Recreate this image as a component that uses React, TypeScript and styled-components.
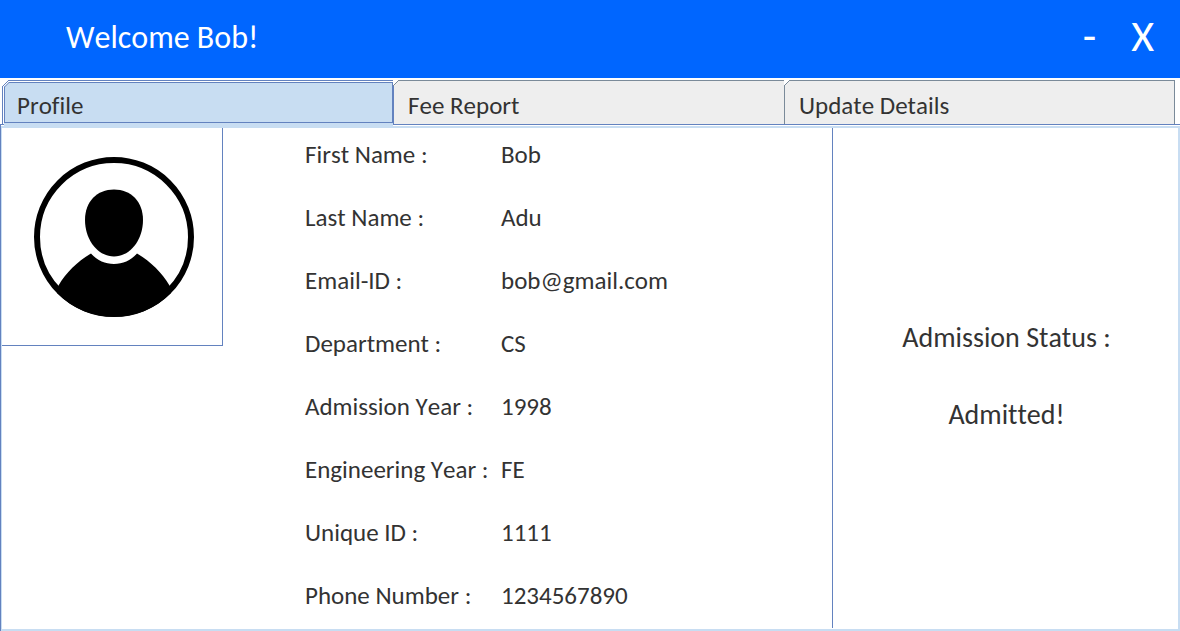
import React, { useState } from "react";
import styled, { createGlobalStyle, css } from "styled-components";

const color = {
  header: "#0066ff",
  line: "#6382bf",
  tabLine: "#7a8a99",
  selected: "#c8ddf2",
  idle: "#eeeeee",
  text: "#333333",
};

const GlobalStyle = createGlobalStyle`
  * { box-sizing: border-box; }
  body {
    margin: 0;
    background: #fff;
    color: ${color.text};
    font-family: Calibri, Carlito, Lato, sans-serif;
    font-size: 25px;
    line-height: 28px;
    font-kerning: none;
    font-variant-ligatures: none;
  }
`;

const Window = styled.div`
  display: flex;
  flex-direction: column;
  min-height: 100vh;
`;

const Header = styled.header`
  display: flex;
  align-items: center;
  justify-content: space-between;
  height: 78px;
  padding: 0 26px 2px 66px;
  background: ${color.header};
  color: #fff;
`;

const Title = styled.h1`
  margin: 0;
  font-size: 32px;
  line-height: 40px;
  font-weight: 400;
`;

const WindowControls = styled.div`
  display: flex;
  align-items: center;
  gap: 35px;
  padding-bottom: 5px;
`;

const ControlButton = styled.button`
  padding: 0;
  border: 0;
  background: none;
  color: inherit;
  font: inherit;
  font-size: 44px;
  line-height: 48px;
  cursor: pointer;
`;

const TabList = styled.div`
  display: grid;
  grid-template-columns: 392fr 391fr 390fr;
  padding: 2px 5px 0 2px;
`;

const Tab = styled.button<{ $selected: boolean }>`
  position: relative;
  display: flex;
  align-items: flex-start;
  min-width: 0;
  height: 44px;
  margin: 0;
  padding: 11px 14px 0;
  border: solid ${color.tabLine};
  border-width: 1px 1px 0 0;
  background: ${color.idle};
  color: inherit;
  font: inherit;
  text-align: left;
  cursor: pointer;

  ${(p) =>
    p.$selected &&
    css`
      padding: 1px 0 1px 1px;
      border-color: ${color.line};
      border-left-width: 1px;
      background: #fff;

      &::after {
        content: "";
        position: absolute;
        left: 1px;
        right: 0;
        top: 42px;
        height: 5px;
        background: ${color.selected};
      }
    `}
`;

const TabFace = styled.span`
  flex: 1;
  height: 41px;
  padding: 9px 12px 0;
  border: 1px solid ${color.line};
  background: ${color.selected};
`;

const Corner = styled.svg`
  position: absolute;
  left: -1px;
  top: -1px;
`;

const Panel = styled.main`
  display: flex;
  flex: 1;
  padding-top: 1px;
  border-top: 1px solid ${color.line};
  border-left: 1px solid ${color.line};
`;

const PanelBody = styled.div`
  display: grid;
  flex: 1;
  grid-template-columns: 221px 610fr 345fr;
  border: 2px solid ${color.selected};
  border-left-width: 1px;
`;

const Photo = styled.div`
  align-self: start;
  padding: 29px 28px 28px 32px;
  border: solid ${color.line};
  border-width: 0 1px 1px 0;

  svg {
    display: block;
  }
`;

const Details = styled.dl`
  display: grid;
  grid-template-columns: 196px 1fr;
  align-content: start;
  row-gap: 35px;
  margin: 0 0 1px;
  padding: 13px 0 16px 82px;
  border-right: 1px solid ${color.line};
`;

const Label = styled.dt`
  white-space: nowrap;
`;

const Value = styled.dd`
  margin: 0;
`;

const Status = styled.section`
  display: flex;
  flex-direction: column;
  align-items: center;
  justify-content: center;
  gap: 45px;
  padding: 0 0 5px 2px;
  font-size: 28px;
  line-height: 32px;
`;

const StatusText = styled.p`
  margin: 0;
`;

const tabs = ["Profile", "Fee Report", "Update Details"];

const details = [
  ["First Name :", "Bob"],
  ["Last Name :", "Adu"],
  ["Email-ID :", "bob@gmail.com"],
  ["Department :", "CS"],
  ["Admission Year :", "1998"],
  ["Engineering Year :", "FE"],
  ["Unique ID :", "1111"],
  ["Phone Number :", "1234567890"],
];

function TabCorner({ selected }: { selected: boolean }) {
  return selected ? (
    <Corner width="8" height="8" viewBox="0 0 8 8" aria-hidden="true">
      <path d="M0 0h6v1L1 6H0z" fill="#fff" />
      <path d="M2 2h5L2 7z" fill="#fff" />
      <path d="M0.5 6.5L6.5 0.5M2.5 7L7 2.5" stroke={color.line} fill="none" />
    </Corner>
  ) : (
    <Corner width="7" height="7" viewBox="0 0 7 7" aria-hidden="true">
      <path d="M0 0h6L0 6z" fill="#fff" />
      <path d="M0 6L6 0" stroke={color.tabLine} fill="none" />
    </Corner>
  );
}

function Avatar() {
  return (
    <svg width="160" height="160" viewBox="0 0 160 160" role="img" aria-label="Profile photo">
      <circle cx="80" cy="80" r="77" fill="none" stroke="#000" strokeWidth="6" />
      <path d="M80 32.500C97 32.500 109 44.500 109 63C109 83 96 99.500 80 99.500C64 99.500 51 83 51 63C51 44.500 63 32.500 80 32.500Z" />
      <path d="M24.500 128.500C32 115.500 44 104 57 96.500C63 103.500 71 107 80 107C89 107 97 103.500 103 96.500C116 104 128 115.500 135.500 128.500L137 136A80 80 0 0 1 23 136Z" />
    </svg>
  );
}

export default function App() {
  const [active, setActive] = useState(0);

  return (
    <Window>
      <GlobalStyle />
      <Header>
        <Title>Welcome Bob!</Title>
        <WindowControls>
          <ControlButton aria-label="Minimize">-</ControlButton>
          <ControlButton aria-label="Close">X</ControlButton>
        </WindowControls>
      </Header>
      <TabList role="tablist">
        {tabs.map((name, i) => (
          <Tab
            key={name}
            role="tab"
            aria-selected={i === active}
            $selected={i === active}
            onClick={() => setActive(i)}
          >
            {i === active ? <TabFace>{name}</TabFace> : name}
            <TabCorner selected={i === active} />
          </Tab>
        ))}
      </TabList>
      <Panel role="tabpanel">
        <PanelBody>
          <Photo>
            <Avatar />
          </Photo>
          <Details>
            {details.map(([label, value]) => (
              <React.Fragment key={label}>
                <Label>{label}</Label>
                <Value>{value}</Value>
              </React.Fragment>
            ))}
          </Details>
          <Status>
            <StatusText>Admission Status :</StatusText>
            <StatusText>Admitted!</StatusText>
          </Status>
        </PanelBody>
      </Panel>
    </Window>
  );
}
